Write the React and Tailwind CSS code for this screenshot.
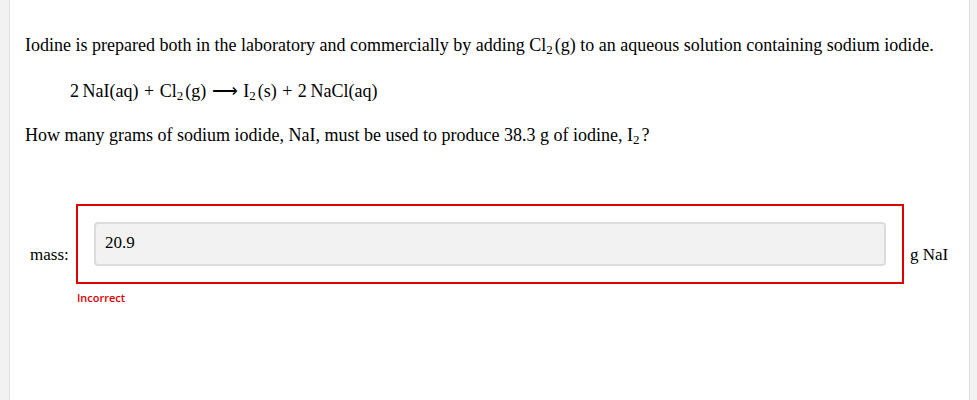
import React from 'react';

function Sub({ children }) {
  // chemical subscript, sits low like the MathJax output
  return <sub className="text-[13px] relative top-[3px] mr-[2px]">{children}</sub>;
}

function App() {
  return (
    <div className="min-h-[400px] bg-[#f2f2f2] flex">
      <div className="ml-[9px] mr-[7px] flex-1 bg-white border-x border-[#dedede] font-['Liberation_Serif',serif] text-[18px] leading-[27px] text-black">
        <div className="pl-[15px] pr-[20px] pt-[32px]">
          <p>
            Iodine is prepared both in the laboratory and commercially by adding Cl<Sub>2</Sub>(g) to an aqueous solution containing sodium iodide.
          </p>
          <p className="mt-[19px] pl-[45px] [word-spacing:1px]">
            2&#8201;NaI(aq) + Cl<Sub>2</Sub>(g) &#10230; I<Sub>2</Sub>(s) + 2&#8201;NaCl(aq)
          </p>
          <p className="mt-[17px]">
            How many grams of sodium iodide, NaI, must be used to produce 38.3 g of iodine, I<Sub>2</Sub>?
          </p>

          <div className="mt-[55px] flex items-start">
            <span className="w-[51px] pt-[37px] pl-[5px] text-[17px]">mass:</span>
            <div>
              <div className="w-[828px] border-2 border-[#e00000] p-[16px]">
                <div className="h-[44px] rounded-[4px] border-2 border-[#dcdcdc] bg-[#f2f2f2] flex items-center pl-[9px] pb-[3px] text-[17px]">
                  20.9
                </div>
              </div>
              <div className="pl-[1px] font-['Open_Sans',sans-serif] font-semibold text-[11px] text-[#e00000]">
                Incorrect
              </div>
            </div>
            <span className="pt-[37px] pl-[6px] text-[17px]">g NaI</span>
          </div>
        </div>
      </div>
    </div>
  );
}

export default App;
